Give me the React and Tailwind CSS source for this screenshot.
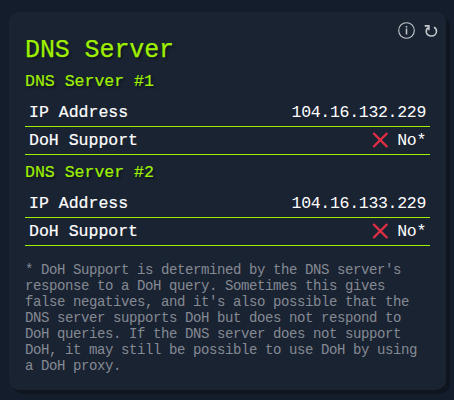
import React from "react";

const servers = [
  { id: 1, ip: "104.16.132.229" },
  { id: 2, ip: "104.16.133.229" },
];

function Cross() {
  return (
    <svg className="mr-[9px] mb-[4px] size-4 shrink-0" viewBox="0 0 16 16" fill="none" stroke="#dd2e44" strokeWidth="2.2" strokeLinecap="round">
      <path d="M1.9 1.6 14.7 14.4M14.7 1.6 1.9 14.4" />
    </svg>
  );
}

function Row({ label, children }) {
  return (
    <div className="flex h-7 items-center justify-between border-b border-[#9fef00] px-1 pt-[2px] text-white">
      <span className="text-[16.5px] tracking-[0.01px] [-webkit-text-stroke:0.2px_white]">{label}</span>
      <span className="flex items-center text-[16.5px] tracking-[-0.3px]">{children}</span>
    </div>
  );
}

function Server({ id, ip }) {
  return (
    <section>
      <h3 className="flex h-[28px] items-center pb-[2px] text-[16.5px] tracking-[0.01px] text-[#9fef00] [-webkit-text-stroke:0.2px_#9fef00] [text-shadow:2px_2px_2px_#101620]">
        DNS Server #{id}
      </h3>
      <div className="mt-[2px] mb-[5px]">
        <Row label="IP Address">{ip}</Row>
        <Row label="DoH Support">
          <Cross />
          No*
        </Row>
      </div>
    </section>
  );
}

export default function App() {
  return (
    <main className="h-[400px] w-[454px] bg-[#141d2b] pt-3 pl-[9px] font-['Liberation_Mono',monospace]">
      <article className="flex h-[378px] w-[437px] flex-col rounded-[10px] bg-[#1a2332] px-4 shadow-[4px_4px_0_0_#101620]">
        <header className="flex h-[57px] items-start justify-between">
          <h2 className="mt-[23px] text-[25px] leading-[32px] tracking-[-0.1px] whitespace-nowrap text-[#9fef00] [-webkit-text-stroke:0.25px_#9fef00] [text-shadow:2px_2px_2px_#101620]">
            DNS Server
          </h2>
          <div className="-mr-2 mt-[10px] flex items-center gap-[9px] text-[#c5c8cc]">
            <svg className="size-[17px]" viewBox="0 0 17 17" fill="none" stroke="currentColor">
              <circle cx="8.5" cy="8.5" r="7.8" strokeWidth="1.1" />
              <path d="M8.5 6.5v6M8.5 4v1.4" strokeWidth="1.5" />
            </svg>
            <svg className="size-[14px]" viewBox="0 0 14 14" fill="none" stroke="currentColor" strokeWidth="1.6">
              <path d="M4.5 3.5C2.6 4.6 2 6.3 2.3 8.2 2.8 10.8 5 12 7.4 12c2.8 0 5.1-2 5.1-4.8 0-1.8-.9-3.2-2.5-4" />
              <path d="M.7 1.9h4.2v4.3" />
            </svg>
          </div>
        </header>
        {servers.map((s) => (
          <Server key={s.id} {...s} />
        ))}
        <p className="mt-[11px] text-[14px] leading-4 tracking-[-0.4px] text-[#858a92]">
          * DoH Support is determined by the DNS server's<br />
          response to a DoH query. Sometimes this gives<br />
          false negatives, and it's also possible that the<br />
          DNS server supports DoH but does not respond to<br />
          DoH queries. If the DNS server does not support<br />
          DoH, it may still be possible to use DoH by using<br />
          a DoH proxy.
        </p>
      </article>
    </main>
  );
}
